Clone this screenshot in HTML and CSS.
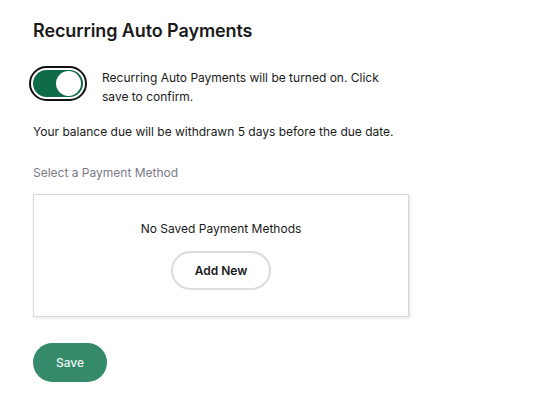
FILE: index.html
```html
<!DOCTYPE html>
<html>
<head>
<meta charset="utf-8">
<link rel="stylesheet" href="styles.css">
</head>
<body>
<main class="page">
  <h1 class="title">Recurring Auto Payments</h1>
  <div class="toggle-row">
    <div class="toggle"><div class="track"><div class="thumb"></div></div></div>
    <p class="toggle-text">Recurring Auto Payments will be turned on. Click save to confirm.</p>
  </div>
  <p class="note">Your balance due will be withdrawn 5 days before the due date.</p>
  <p class="label">Select a Payment Method</p>
  <div class="card">
    <p class="empty">No Saved Payment Methods</p>
    <button class="add-btn">Add New</button>
  </div>
  <button class="save-btn">Save</button>
</main>
</body>
</html>
```

FILE: styles.css
```css
* { box-sizing: border-box; }
body {
  margin: 0;
  background: #fff;
  font-family: Inter, "Noto Sans", sans-serif;
  color: #1a1a1a;
}
.page {
  padding: 20px 0 0 33px;
  width: 410px;
}
.title {
  margin: 0;
  font-size: 18px;
  font-weight: 600;
  line-height: 22px;
  letter-spacing: -0.1px;
}
.toggle-row {
  display: flex;
  align-items: flex-start;
  margin-top: 24px;
  gap: 15px;
}
.toggle {
  flex: none;
  width: 58px;
  height: 35px;
  border: 2px solid #111;
  border-radius: 18px;
  padding: 2px;
  margin-left: -4px;
  background: #fff;
}
.track {
  width: 100%;
  height: 100%;
  background: #0e6b47;
  border-radius: 14px;
  display: flex;
  justify-content: flex-end;
  align-items: center;
  padding: 1px 2px;
}
.thumb {
  width: 25px;
  height: 25px;
  background: #fff;
  border-radius: 50%;
}
.toggle-text {
  margin: 2px 0 0;
  font-size: 12px;
  line-height: 19px;
  width: 290px;
}
.note {
  margin: 16px 0 0;
  font-size: 12px;
  line-height: 19px;
}
.label {
  margin: 22px 0 0;
  font-size: 12px;
  line-height: 19px;
  color: #7b7a86;
}
.card {
  margin-top: 12px;
  width: 376px;
  height: 123px;
  border: 1px solid #d8d8d8;
  box-shadow: 1px 1px 3px rgba(0,0,0,0.12);
  display: flex;
  flex-direction: column;
  align-items: center;
  padding-top: 24px;
}
.empty {
  margin: 0;
  font-size: 12px;
  line-height: 19px;
}
.add-btn {
  margin-top: 13px;
  width: 100px;
  height: 39px;
  border: 2px solid #dcdcdc;
  border-radius: 20px;
  background: #fff;
  font-family: inherit;
  font-size: 12px;
  font-weight: 600;
  color: #1a1a1a;
}
.save-btn {
  display: block;
  margin-top: 26px;
  width: 74px;
  height: 39px;
  border: none;
  border-radius: 20px;
  background: #358b69;
  color: #eef5f1;
  font-family: inherit;
  font-size: 12px;
  font-weight: 500;
}
```
